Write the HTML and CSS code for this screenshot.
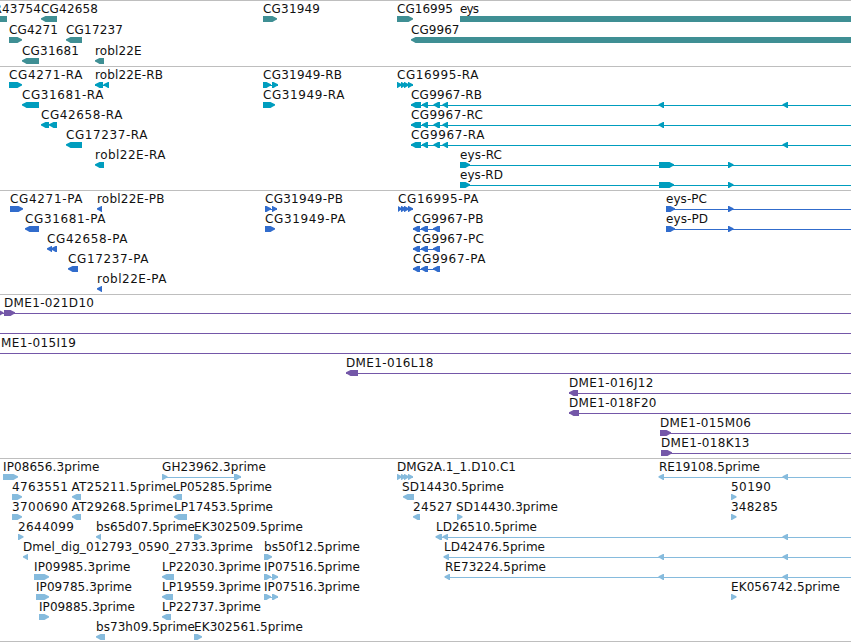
FILE: index.html
```
<!DOCTYPE html>
<html lang="en">
<head>
    <meta charset="UTF-8">
    <title>Region view</title>
    <link rel="stylesheet" href="styles.css">
</head>
<body>

<div class="browser">
    <svg class="track genes" id="genes"></svg>
    <svg class="track transcripts" id="transcripts"></svg>
    <svg class="track proteins" id="proteins"></svg>
    <svg class="track bacs" id="bacs"></svg>
    <svg class="track ests" id="ests"></svg>
</div>

<script src="tracks.js"></script>
</body>
</html>
```

FILE: styles.css
```
body {
    margin: 0;
    background-color: white;
    overflow: hidden;
}

.browser {
    display: flex;
    flex-direction: column;
    width: 851px;
    border-bottom: 1px solid #bebebe;
}

.track {
    display: block;
    box-sizing: border-box;
    width: 100%;
    border-top: 1px solid #bebebe;
    overflow: hidden;
}

.label {
    font-family: "DejaVu Sans", sans-serif;
    font-size: 12px;
    fill: #111;
}

.genes {
    height: 66px;
    fill: #3f8f94;
}

.transcripts {
    height: 124px;
    fill: #009dbe;
}

.proteins {
    height: 104px;
    fill: #316ccc;
}

.bacs {
    height: 164px;
    fill: #7457a8;
}

.ests {
    height: 183px;
    fill: #86bbdd;
}
```

FILE: tracks.js
```
var END = 860;

// [row, name, label left, label right, strand, blocks, line]
var genes = [
    [0, "R43754", -6, 40.5, -1, [[-8, 7]]],
    [0, "CG42658", 41.5, 97.5, -1, [[41, 57]]],
    [0, "CG31949", 263.5, 319.5, 1, [[263, 277]]],
    [0, "CG16995", 397.5, 452.5, 1, [[397, 413]]],
    [0, "eys", 460.5, 478.5, 1, [[460, END]]],
    [1, "CG4271", 9.5, 57.5, 1, [[9, 22]]],
    [1, "CG17237", 66.5, 122.5, -1, [[66, 82]]],
    [1, "CG9967", 411.5, 459, -1, [[411, END]]],
    [2, "CG31681", 22.5, 78.5, -1, [[22, 39]]],
    [2, "robl22E", 95.5, 141, -1, [[95, 104]]]
];

var transcripts = [
    [0, "CG4271-RA", 9.5, 82, 1, [[9, 22]]],
    [0, "robl22E-RB", 95.5, 162.5, -1, [[95, 103], [103.5, 109]], [95, 109]],
    [0, "CG31949-RB", 263.5, 341.5, 1, [[263, 271], [272, 278]], [263, 278]],
    [0, "CG16995-RA", 397.5, 478, 1, [[397, 402], [401, 406], [404, 409], [408, 413]], [397, 413]],
    [1, "CG31681-RA", 22.5, 103, -1, [[22, 39]]],
    [1, "CG31949-RA", 263.5, 344, 1, [[263, 275]]],
    [1, "CG9967-RB", 411.5, 481.5, -1, [[411, 421], [422, 428], [433.5, 440], [442.5, 448], [658.5, 664], [782.5, 788]], [411, END]],
    [2, "CG42658-RA", 41.5, 122, -1, [[41, 49], [49, 57]]],
    [2, "CG9967-RC", 411.5, 482.5, -1, [[411, 421], [422, 428], [433.5, 440], [442.5, 448], [658.5, 664]], [411, END]],
    [3, "CG17237-RA", 66.5, 147, -1, [[66, 82]]],
    [3, "CG9967-RA", 411.5, 484, -1, [[411, 421], [422, 428], [433.5, 440], [442.5, 448], [782.5, 788]], [411, END]],
    [4, "robl22E-RA", 95.5, 165, -1, [[95, 104]]],
    [4, "eys-RC", 460.5, 501.5, 1, [[460, 470], [659, 674], [728, 733.5]], [460, END]],
    [5, "eys-RD", 460.5, 502.5, 1, [[460, 470], [659, 674], [728, 733.5]], [460, END]]
];

var proteins = [
    [0, "CG4271-PA", 10.5, 82, 1, [[10, 23]]],
    [0, "robl22E-PB", 97.5, 164, -1, [[97, 102]]],
    [0, "CG31949-PB", 265.5, 342.5, 1, [[265, 271], [272, 277]], [265, 277]],
    [0, "CG16995-PA", 398.5, 478, 1, [[398, 402], [401, 406], [404, 409], [408, 413]], [398, 413]],
    [0, "eys-PC", 666.5, 706.5, 1, [[666, 675], [728, 733.5]], [666, END]],
    [1, "CG31681-PA", 25.5, 105, -1, [[25, 39]]],
    [1, "CG31949-PA", 265.5, 345, 1, [[265, 275]]],
    [1, "CG9967-PB", 413.5, 483, -1, [[413, 420], [421, 428], [433, 440]], [413, 440]],
    [1, "eys-PD", 666.5, 707.5, 1, [[666, 675], [728, 733.5]], [666, END]],
    [2, "CG42658-PA", 47.5, 127, -1, [[47, 52], [51, 57]]],
    [2, "CG9967-PC", 413.5, 483.5, -1, [[413, 420], [421, 428], [433, 440]], [413, 440]],
    [3, "CG17237-PA", 68.5, 148, -1, [[68, 78]]],
    [3, "CG9967-PA", 413.5, 485, -1, [[413, 420], [421, 428], [433, 440]], [413, 440]],
    [4, "robl22E-PA", 97.5, 166, -1, [[97, 102]]]
];

var bacs = [
    [0, "DME1-021D10", 4.5, 93.5, 1, [[-3, 3.5], [4, 15]], [0, END]],
    [1, "", 0, 0, 1, [], [0, END]],
    [2, "ME1-015I19", 1.5, 75.5, 1, [], [0, END]],
    [3, "DME1-016L18", 346.5, 433, -1, [[346, 358]], [346, END]],
    [4, "DME1-016J12", 569.5, 653, -1, [[569, 578]], [569, END]],
    [5, "DME1-018F20", 569.5, 656, -1, [[569, 579]], [569, END]],
    [6, "DME1-015M06", 660.5, 750.5, 1, [[660, 671]], [660, END]],
    [7, "DME1-018K13", 661.5, 749, 1, [[661, 672]], [661, END]]
];

var ests = [
    [0, "IP08656.3prime", 3.5, 99, 1, [[3, 18]]],
    [0, "GH23962.3prime", 162.5, 265.5, 1, [[162, 167.5], [234, 241]], [162, 241]],
    [0, "DMG2A.1_1.D10.C1", 397.5, 515.5, 1, [[397, 402], [401, 406], [404, 409], [408, 413]], [397, 413]],
    [0, "RE19108.5prime", 659.5, 759.5, -1, [[658.5, 664], [782.5, 788]], [660, END]],
    [1, "4763551", 12.5, 67.5, 1, [[12, 22]]],
    [1, "AT25211.5prime", 72, 173, -1, [[72, 81]]],
    [1, "LP05285.5prime", 173.5, 271.5, -1, [[173, 182]]],
    [1, "SD14430.5prime", 402.5, 503.5, -1, [[403, 414]]],
    [1, "50190", 731.5, 770.5, 1, [[731, 736.5]]],
    [2, "3700690", 12.5, 67.5, 1, [[12, 22]]],
    [2, "AT29268.5prime", 72, 173, -1, [[72, 81]]],
    [2, "LP17453.5prime", 174.5, 272.5, -1, [[174, 187]]],
    [2, "24527", 413.5, 452, -1, [[413, 420]]],
    [2, "SD14430.3prime", 456.5, 557.5, 1, [[457, 462.5]]],
    [2, "348285", 731.5, 777.5, 1, [[731, 736.5]]],
    [3, "2644099", 18.5, 73.5, 1, [[18, 23.5]]],
    [3, "bs65d07.5prime", 96.5, 194.5, -1, [[96, 101]]],
    [3, "EK302509.5prime", 194.5, 302.5, 1, [[194, 202]]],
    [3, "LD26510.5prime", 436.5, 536.5, -1, [[435.5, 442], [442.5, 448], [782.5, 788]], [436, END]],
    [4, "Dmel_dig_012793_0590_2733.3prime", 23.5, 252.5, -1, [[23, 28]]],
    [4, "bs50f12.5prime", 264.5, 359.5, 1, [[264, 272]]],
    [4, "LD42476.5prime", 444.5, 544.5, -1, [[443.5, 449], [658.5, 664], [782.5, 788]], [444, END]],
    [5, "IP09985.3prime", 34.5, 130, 1, [[34, 49]]],
    [5, "LP22030.3prime", 162.5, 260.5, -1, [[162, 174]]],
    [5, "IP07516.5prime", 264.5, 359.5, 1, [[264, 271], [272, 278]], [264, 278]],
    [5, "RE73224.5prime", 445.5, 545.5, -1, [[444.5, 450], [658.5, 664], [782.5, 788]], [445, END]],
    [6, "IP09785.3prime", 36.5, 131.5, 1, [[36, 49]]],
    [6, "LP19559.3prime", 162.5, 260.5, -1, [[162, 173]]],
    [6, "IP07516.3prime", 264.5, 359.5, 1, [[264, 271], [272, 278]], [264, 278]],
    [6, "EK056742.5prime", 731.5, 839.5, 1, [[731, 736.5]]],
    [7, "IP09885.3prime", 39.5, 134.5, 1, [[39, 49]]],
    [7, "LP22737.3prime", 162.5, 260.5, -1, [[162, 171]]],
    [8, "bs73h09.5prime", 96.5, 194.5, -1, [[96, 105]]],
    [8, "EK302561.5prime", 194.5, 302.5, 1, [[194, 202]]]
];

function add(svg, tag, attrs) {
    var el = document.createElementNS("http://www.w3.org/2000/svg", tag);
    for (var key in attrs) {
        el.setAttribute(key, attrs[key]);
    }
    svg.appendChild(el);
    return el;
}

// a box with a pointed end on the side the strand runs to
function arrow(svg, x1, x2, y, strand) {
    var tip = strand > 0 ? x2 : x1;
    var back = strand > 0 ? x1 : x2;
    var neck = tip - strand * Math.min(4.5, x2 - x1);
    var mid = tip - strand * 2;
    add(svg, "polygon", {
        points: [
            [back, y], [neck, y], [mid, y + 1.2], [tip, y + 2.3],
            [tip, y + 3.5], [mid, y + 4.6], [neck, y + 6], [back, y + 6]
        ].join(" ")
    });
}

function drawTrack(id, features, rowHeight) {
    var svg = document.getElementById(id);
    features.forEach(function (f) {
        var top = f[0] * rowHeight;
        if (f[6]) {
            add(svg, "rect", {x: f[6][0], y: top + 18, width: f[6][1] - f[6][0], height: 1});
        }
        f[5].forEach(function (b) {
            arrow(svg, b[0], b[1], top + 15, f[4]);
        });
        if (f[1]) {
            var text = add(svg, "text", {
                "class": "label", x: f[2] - 0.5, y: top + 12, textLength: f[3] - f[2] + 1
            });
            text.textContent = f[1];
        }
    });
}

drawTrack("genes", genes, 21);
drawTrack("transcripts", transcripts, 20);
drawTrack("proteins", proteins, 20);
drawTrack("bacs", bacs, 20);
drawTrack("ests", ests, 20);
```
